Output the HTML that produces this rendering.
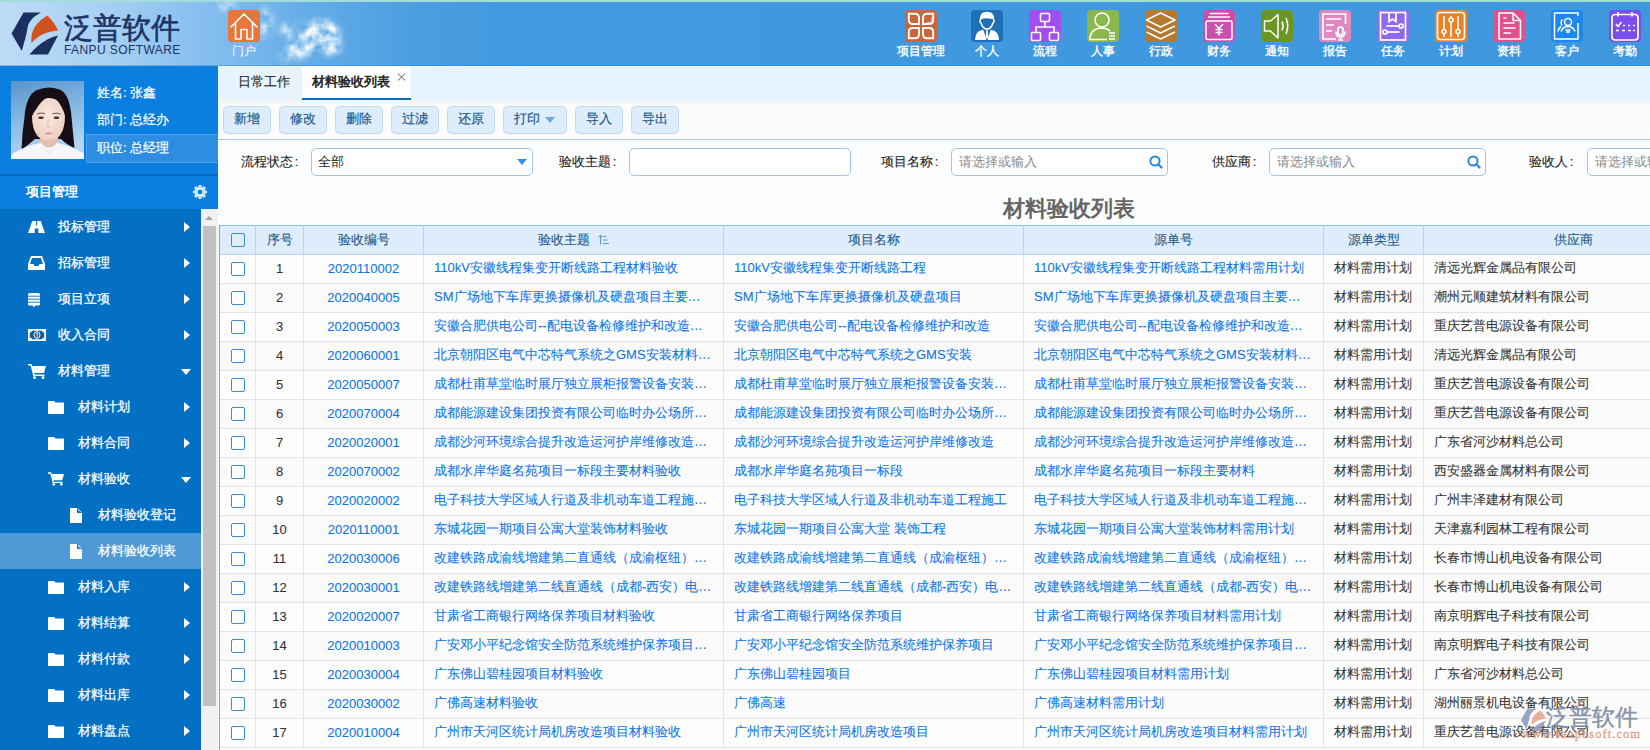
<!DOCTYPE html>
<html><head><meta charset="utf-8">
<style>
*{box-sizing:border-box;margin:0;padding:0}
html,body{width:1650px;height:750px;overflow:hidden;font-family:"Liberation Sans",sans-serif;font-size:13px;color:#333;background:#fcfdfe}
#user .abs,#content .btn,.tab{-webkit-text-stroke:0.2px currentColor}
#tbl th{-webkit-text-stroke:0.1px currentColor}
#tbl td{-webkit-text-stroke:0.08px currentColor}
.lbl{-webkit-text-stroke:0.1px currentColor}
.abs{position:absolute}
#hdr{position:absolute;left:0;top:0;width:1650px;height:66px;background:linear-gradient(90deg,#bddcf6 0px,#a6d0f3 110px,#86bff0 200px,#66aee8 300px,#4c9ee1 410px,#4199de 520px,#3f98de 1650px);overflow:hidden}
#hdr .topline{position:absolute;left:0;top:0;width:1650px;height:2px;background:#a3dcda}
#hdr .botline{position:absolute;left:0;top:65px;width:1650px;height:1px;background:rgba(40,120,200,.35)}
.nav{position:absolute;top:10px;width:58px;margin-left:-29px;text-align:center;color:#fff;font-size:12px}
.nav svg{display:block;margin:0 auto}
.nav span{display:block;line-height:14px;margin-top:1.5px;-webkit-text-stroke:0.35px #fff}
#side{position:absolute;left:0;top:66px;width:218px;height:684px;background:#0370c4;overflow:hidden}
#user{position:absolute;left:0;top:0;width:218px;height:109px;background:#0a7fe0}
#userline{position:absolute;left:0;top:108px;width:218px;height:2px;background:#0866bb}
#secthdr{position:absolute;left:0;top:110px;width:218px;height:33px;background:#0a7fe0;color:#fff;font-weight:bold;font-size:13px}
.mi{position:absolute;left:0;width:201px;height:36px;color:#fff;font-size:13px;line-height:35px}
.mi span{-webkit-text-stroke:0.25px #fff}
.mi svg{position:absolute}
.mi .arr{position:absolute;left:184px;top:13px;width:0;height:0;border-top:5px solid transparent;border-bottom:5px solid transparent;border-left:6px solid #fff}
.mi .darr{position:absolute;left:181px;top:16px;width:0;height:0;border-left:5px solid transparent;border-right:5px solid transparent;border-top:6px solid #fff}
#content{position:absolute;left:218px;top:66px;width:1432px;height:684px;background:#fbfdfe}
#tabs{position:absolute;left:0;top:0;width:1432px;height:34px;background:#e7f3fd}
.tab{position:absolute;top:0;height:34px;line-height:32px;font-size:13px;color:#333}
#toolbar{position:absolute;left:0;top:34px;width:1432px;height:40px;background:linear-gradient(#f1f3f4 0px,#fafbfb 5px,#fbfcfc 100%);border-bottom:1px solid #a9cae8}
.btn{position:absolute;top:6px;height:28px;width:48px;border:1px solid #c3d9ee;border-radius:5px;background:#deedfb;color:#22598c;font-size:13px;line-height:24px;text-align:center}
.lbl{position:absolute;top:85.5px;line-height:20px;font-size:13px;color:#222}
.inp{position:absolute;top:82px;height:28px;width:222px;border:1px solid #9fc5ea;border-radius:5px;background:#fff;font-size:13px;line-height:26px;padding-left:7px;color:#8a8a8a}
#title{position:absolute;left:785px;top:130px;font-size:22px;font-weight:bold;color:#666;line-height:26px}
#tbl{position:absolute;left:1px;top:159px;border-collapse:collapse;table-layout:fixed;width:1504px}
#tbl td,#tbl th{height:29px;border:1px solid #e3e3e3;white-space:nowrap;overflow:hidden;text-overflow:ellipsis;font-size:13px;font-weight:normal;padding:0 10px 2px 10px}
#tbl th{background:#deedfb;border-color:#b7d5f0;color:#22598c;text-align:center;height:29px;padding-bottom:1px}
#tbl tr:first-child th{border-top:1px solid #8dbde8}
#tbl td{color:#333}
#tbl tr.o td{background:#fdfdfd}
#tbl tr.e td{background:#fafafa}
#tbl td.c{text-align:center;padding:0 0 2px 0}
#tbl td:first-child,#tbl th:first-child{border-left:1px solid #6aa9e4}
#tbl th .cb{background:transparent;position:relative;top:-1px}
#tbl td a{color:#0a75ea;text-decoration:none}
#tbl td.lk{color:#0a75ea}
.cb{display:inline-block;width:14px;height:14px;border:1px solid #3c8bd8;border-radius:2px;background:#fff;vertical-align:middle}
</style></head><body>

<div id="hdr">
  <div class="topline"></div><div class="botline"></div>
  <!-- logo -->
  <svg class="abs" style="left:10px;top:11px" width="50" height="45" viewBox="0 0 50 45">
    <path d="M1.5 22.5 L13.5 1.5 L31 1.5 C24 5 18.5 10 17.5 17 C16.5 24 14 32 11.8 40 Z" fill="#1c2f60"/>
    <path d="M21.5 32 C21 23 22 14 37.5 4.5 C42 9 46 14 48 19.5 C38 20 27 25 21.5 32 Z" fill="#d0521c"/>
    <path d="M19.5 43.5 C28 33 38 27 48 24.5 L38 43.5 Z" fill="#1c2f60"/>
  </svg>
  <div class="abs" style="left:64px;top:10px;font-size:29px;color:#1d3265;line-height:36px;-webkit-text-stroke:0.6px #1d3265">泛普软件</div>
  <div class="abs" style="left:64px;top:43px;font-size:12px;color:#1d3265;line-height:14px;letter-spacing:0.42px">FANPU SOFTWARE</div>
  <!-- clouds -->
  <svg class="abs" style="left:200px;top:0" width="170" height="66" viewBox="0 0 170 66">
    <defs>
    <filter id="cl" x="-30%" y="-30%" width="160%" height="160%">
      <feGaussianBlur in="SourceGraphic" stdDeviation="3" result="b"/>
      <feTurbulence type="fractalNoise" baseFrequency="0.08" numOctaves="3" seed="3" result="n"/>
      <feColorMatrix in="n" type="matrix" values="0 0 0 0 1  0 0 0 0 1  0 0 0 0 1  0 0 0 2.6 -0.75" result="na"/>
      <feComposite in="b" in2="na" operator="in" result="c"/>
      <feGaussianBlur in="c" stdDeviation="0.7"/>
    </filter>
    </defs>
    <g filter="url(#cl)" fill="#fff">
      <ellipse cx="120" cy="34" rx="20" ry="14"/>
      <ellipse cx="105" cy="44" rx="18" ry="10"/>
      <ellipse cx="130" cy="46" rx="12" ry="9" opacity=".9"/>
      <ellipse cx="92" cy="55" rx="12" ry="6" opacity=".8"/>
      <ellipse cx="88" cy="30" rx="8" ry="7" opacity=".7"/>
      <ellipse cx="66" cy="24" rx="7" ry="15" opacity=".9"/>
      <ellipse cx="27" cy="7" rx="10" ry="4" opacity=".8"/>
    </g>
  </svg>
  <div class="nav" style="left:244px">
    <svg width="32" height="32" viewBox="0 0 32 32"><rect width="32" height="32" rx="4" fill="#e8763a"/>
    <path d="M3 17 L16 4 L29 17 M7.5 13 V29 H13 V19.5 H19 V29 H24.5 V13" fill="none" stroke="#fff" stroke-width="1.6" stroke-linejoin="round" stroke-linecap="round"/></svg>
    <span style="-webkit-text-stroke:0">门户</span>
  </div>

  <div class="nav" style="left:921px">
    <svg width="32" height="32" viewBox="0 0 32 32"><rect width="32" height="32" rx="4" fill="#c8653a"/>
    <g fill="none" stroke="#fff" stroke-width="1.9">
      <path d="M3.8 3.8 H10 Q14 3.8 14 7.8 V14 H7.8 Q3.8 14 3.8 10 Z"/>
      <path d="M18 14 V7.8 Q18 3.8 22 3.8 H28.2 V10 Q28.2 14 24.2 14 Z"/>
      <path d="M3.8 22 Q3.8 18 7.8 18 H14 V24.2 Q14 28.2 10 28.2 H3.8 Z"/>
      <path d="M18 18 H24.2 Q28.2 18 28.2 22 V28.2 H22 Q18 28.2 18 24.2 Z"/>
      <path d="M26.5 7.5 V10 Q26.5 12.3 24 12.3 H21.5" stroke-width=".7" opacity=".8"/>
    </g></svg>
    <span>项目管理</span>
  </div>
  <div class="nav" style="left:987px">
    <svg width="32" height="32" viewBox="0 0 32 32"><rect width="32" height="32" rx="4" fill="#1f6fb8"/>
    <path d="M9 10.5 Q8 2 16 1.8 Q24 2 23 10.5 Q22 8.2 16.5 8.4 Q12.5 7.5 9 10.5 Z" fill="#fff"/>
    <path d="M9.4 9.6 Q8.2 10.6 9.3 12.6 L10.2 13.2 Q11.6 18.9 16 18.9 Q20.4 18.9 21.8 13.2 L22.7 12.6 Q23.8 10.6 22.6 9.6" fill="none" stroke="#fff" stroke-width="1.5"/>
    <path d="M4 30 Q4.3 22.3 9.5 20.6 L12.2 19.8 L15.2 28 L15.2 30 Z M28 30 Q27.7 22.3 22.5 20.6 L19.8 19.8 L16.8 28 L16.8 30 Z M15.2 20.2 H16.8 L17.1 27 L16 28.8 L14.9 27 Z" fill="#fff"/>
    </svg>
    <span>个人</span>
  </div>
  <div class="nav" style="left:1045px">
    <svg width="32" height="32" viewBox="0 0 32 32"><rect width="32" height="32" rx="4" fill="#a24ff0"/>
    <g fill="none" stroke="#fff" stroke-width="1.6">
      <rect x="11.5" y="3.5" width="9" height="8" rx="1"/>
      <path d="M16 11.5 V17 M7 23 V17 H25 V23"/>
      <rect x="2.5" y="22.5" width="9" height="8" rx="1"/>
      <rect x="20.5" y="22.5" width="9" height="8" rx="1"/>
    </g></svg>
    <span>流程</span>
  </div>
  <div class="nav" style="left:1103px">
    <svg width="32" height="32" viewBox="0 0 32 32"><rect width="32" height="32" rx="4" fill="#8ab84c"/>
    <g fill="none" stroke="#fff" stroke-width="1.6">
      <circle cx="15" cy="10" r="7"/>
      <path d="M20 29.5 H3 Q3 18.5 15 18 Q20 18 23 21"/>
      <path d="M22 23 H28 M22 26 H28 M22 29 H28"/>
    </g></svg>
    <span>人事</span>
  </div>
  <div class="nav" style="left:1161px">
    <svg width="32" height="32" viewBox="0 0 32 32"><rect width="32" height="32" rx="4" fill="#b5792f"/>
    <g fill="none" stroke="#fff" stroke-width="1.5" stroke-linejoin="round">
      <path d="M1.5 10 L15.5 3 L30 10 L15.5 17 Z"/>
      <path d="M1.5 16 L15.5 23 L30 16"/>
      <path d="M1.5 22 L15.5 29 L30 22"/>
    </g></svg>
    <span>行政</span>
  </div>
  <div class="nav" style="left:1219px">
    <svg width="32" height="32" viewBox="0 0 32 32"><rect width="32" height="32" rx="4" fill="#c94fae"/>
    <g fill="none" stroke="#fff" stroke-width="1.5">
      <path d="M6.5 3.5 H25.5 M5 7 H27"/>
      <rect x="3" y="11" width="26" height="18.5" rx="1.5"/>
      <path d="M12 14 L16 18.5 L20 14 M16 18.5 V25.5 M12.5 19.5 H19.5 M12.5 22.5 H19.5"/>
    </g></svg>
    <span>财务</span>
  </div>
  <div class="nav" style="left:1277px">
    <svg width="32" height="32" viewBox="0 0 32 32"><rect width="32" height="32" rx="4" fill="#6a9624"/>
    <g fill="none" stroke="#fff" stroke-width="1.5" stroke-linejoin="round">
      <path d="M3.5 11 H9.5 L17 4.5 V28 L9.5 21 H3.5 Z"/>
      <path d="M21 11.5 Q23 16 21 20.5 M25 8 Q28.5 16 25 24"/>
    </g></svg>
    <span>通知</span>
  </div>
  <div class="nav" style="left:1335px">
    <svg width="32" height="32" viewBox="0 0 32 32"><rect width="32" height="32" rx="4" fill="#dd8ac0"/>
    <g fill="none" stroke="#fff" stroke-width="1.7">
      <path d="M17 29 H4 V4 H26.5 V14"/>
      <path d="M7 9 H22 M7 15 H15 M7 21 H13"/>
      <rect x="19" y="17" width="5" height="8" rx="2.5"/>
      <path d="M17 21.5 Q17 27 21.5 27 Q26 27 26 21.5 M21.5 27 V30 M19 30 H24"/>
    </g></svg>
    <span>报告</span>
  </div>
  <div class="nav" style="left:1393px">
    <svg width="32" height="32" viewBox="0 0 32 32"><rect width="32" height="32" rx="4" fill="#9069f0"/>
    <g fill="none" stroke="#fff" stroke-width="1.7">
      <rect x="3.5" y="2.5" width="25" height="27.5"/>
      <path d="M12 2.5 V11.5 L15.5 9 L19 11.5 V2.5"/>
      <path d="M9.5 16 H22"/><circle cx="24" cy="16" r="2"/>
      <path d="M10 22 H22.5"/><circle cx="8" cy="22" r="2"/>
    </g></svg>
    <span>任务</span>
  </div>
  <div class="nav" style="left:1451px">
    <svg width="32" height="32" viewBox="0 0 32 32"><rect width="32" height="32" rx="4" fill="#f08024"/>
    <g fill="none" stroke="#fff" stroke-width="1.6">
      <rect x="2.5" y="2.5" width="27" height="27" rx="3"/>
      <path d="M9 6 V19.5 M9 23.5 V27 M16 6 V8 M16 12 V27 M23 6 V19.5 M23 23.5 V27"/>
      <circle cx="9" cy="21.5" r="2"/><circle cx="16" cy="10" r="2"/><circle cx="23" cy="21.5" r="2"/>
    </g></svg>
    <span>计划</span>
  </div>
  <div class="nav" style="left:1509px">
    <svg width="32" height="32" viewBox="0 0 32 32"><rect width="32" height="32" rx="4" fill="#e0508a"/>
    <g fill="none" stroke="#fff" stroke-width="1.6" stroke-linejoin="round">
      <path d="M6 3 H20 L27.5 10.5 V29 H6 Z"/>
      <path d="M20 3 V10.5 H27.5"/>
      <path d="M10.5 8 H13.5 M10.5 13 H21.5 M10.5 18 H22.5 M10.5 23 H18"/>
    </g></svg>
    <span>资料</span>
  </div>
  <div class="nav" style="left:1567px">
    <svg width="32" height="32" viewBox="0 0 32 32"><rect width="32" height="32" rx="4" fill="#1b88ef"/>
    <g fill="none" stroke="#fff" stroke-width="1.5">
      <path d="M27 13 V29 H3.5 V3 H27 V6"/>
      <circle cx="17" cy="12" r="3.5"/>
      <path d="M10 21.5 Q12 16.5 17 16.5 Q22 16.5 24 21.5 M14.5 20 H19.5 M15 22 H19"/>
      <path d="M11.5 9.5 Q9 12 11 15.5 M10 16.5 Q7.5 18 7 21.5"/>
    </g></svg>
    <span>客户</span>
  </div>
  <div class="nav" style="left:1625px">
    <svg width="32" height="32" viewBox="0 0 32 32"><rect width="32" height="32" rx="4" fill="#7b4ded"/>
    <g fill="none" stroke="#fff" stroke-width="1.7">
      <rect x="3" y="4.5" width="26" height="25.5" rx="3"/>
      <path d="M9 2 V6.5 M23 2 V6.5"/>
      <path d="M7 14 L9 16.5 L12.5 12 M14 15.5 H16 M19 15.5 H21 M24 15.5 H26 M7 20.5 H10 M13 20.5 H16 M19 20.5 H22 M24 20.5 H26"/>
    </g></svg>
    <span>考勤</span>
  </div>
</div>

<div id="side">
  <div id="user">
        <svg class="abs" style="left:11px;top:15px" width="73" height="78" viewBox="0 0 73 78">
      <defs>
        <linearGradient id="pbg" x1="0" y1="0" x2="0.25" y2="1"><stop offset="0" stop-color="#5a93c9"/><stop offset=".5" stop-color="#86b8e4"/><stop offset="1" stop-color="#b4d6f3"/></linearGradient>
        <radialGradient id="pface" cx=".5" cy=".4" r=".65"><stop offset="0" stop-color="#f8e6dd"/><stop offset=".8" stop-color="#efd3c4"/><stop offset="1" stop-color="#dfb8a6"/></radialGradient>
        <filter id="pb" x="-10%" y="-10%" width="120%" height="120%"><feGaussianBlur stdDeviation=".45"/></filter>
      </defs>
      <rect width="73" height="78" fill="url(#pbg)"/>
      <g filter="url(#pb)">
      <path d="M10.5 69 Q11 52 13.5 36 Q15 14 26 9 Q38 4 50 9 Q59 15 60.5 36 Q62 52 63.5 67 Q56 64 50 58 L24 58 Q17 64 10.5 69 Z" fill="#141113"/>
      <path d="M29 52 L29 65 Q38 70 47 65 L47 52 Z" fill="#e4bfae"/>
      <path d="M21 35 Q21 18 38 17 Q54 18 54 35 Q54 48 48.5 55 Q43 60.5 37.5 60.5 Q32 60.5 26.5 55 Q21 48 21 35 Z" fill="url(#pface)"/>
      <path d="M20.5 36 Q20 16 37 12.5 Q42 12 41 14 Q33 17 28 24 Q23 31 20.5 36 Z" fill="#141113"/>
      <path d="M54.5 36 Q55 17 42 13 Q39 13 40 15 Q47 19 50 25 Q53 30 54.5 36 Z" fill="#141113"/>
      <path d="M0 78 L0 74 Q8 68 22 63.5 L30 62 Q38 71 46 62 L52 63.5 Q66 68 73 72.5 L73 78 Z" fill="#f5f6f9"/>
      <path d="M32.5 66 L38 73 L43.5 66" fill="none" stroke="#dfe2ea" stroke-width=".8"/>
      <ellipse cx="30" cy="36.8" rx="2.8" ry="1.3" fill="#3b2d2b"/><ellipse cx="45.5" cy="36.8" rx="2.8" ry="1.3" fill="#3b2d2b"/>
      <path d="M26 33 Q30 31.3 34 32.6 M41.5 32.6 Q45.5 31.3 49.5 33" stroke="#5a443c" stroke-width=".9" fill="none"/>
      <path d="M37.5 38.5 Q36.8 44 36 45.5 Q37.5 46.8 39.5 45.5" stroke="#d9ad9c" stroke-width=".7" fill="none"/>
      <path d="M33.5 52 Q37.7 54.6 42 52 Q37.7 50.8 33.5 52 Z" fill="#dc8790"/>
      </g>
    </svg>
    <div class="abs" style="left:86px;top:68px;width:132px;height:29px;background:#2d8de3;border:1px solid #4ea2eb;border-right:none"></div>
    <div class="abs" style="left:97px;top:17px;color:#fff;line-height:20px">姓名: 张鑫</div>
    <div class="abs" style="left:97px;top:44px;color:#fff;line-height:20px">部门: 总经办</div>
    <div class="abs" style="left:97px;top:72px;color:#fff;line-height:20px">职位: 总经理</div>
  </div>
  <div id="userline"></div>
  <div id="secthdr"><span class="abs" style="left:26px;top:5.5px;line-height:20px">项目管理</span>
    <svg class="abs" style="left:192px;top:8px" width="16" height="16" viewBox="0 0 16 16"><path fill="#d3e8fb" fill-rule="evenodd" d="M13.06 6.43 L15.03 6.43 L15.03 9.57 L13.06 9.57 L12.69 10.47 L14.08 11.86 L11.86 14.08 L10.47 12.69 L9.57 13.06 L9.57 15.03 L6.43 15.03 L6.43 13.06 L5.53 12.69 L4.14 14.08 L1.92 11.86 L3.31 10.47 L2.94 9.57 L0.97 9.57 L0.97 6.43 L2.94 6.43 L3.31 5.53 L1.92 4.14 L4.14 1.92 L5.53 3.31 L6.43 2.94 L6.43 0.97 L9.57 0.97 L9.57 2.94 L10.47 3.31 L11.86 1.92 L14.08 4.14 L12.69 5.53 Z M10.3 8 A2.3 2.3 0 1 0 5.7 8 A2.3 2.3 0 1 0 10.3 8 Z"/></svg>
  </div>
  <div id="menu" class="abs" style="left:0;top:143px;width:218px;height:541px"><div class="mi" style="top:0px;"><svg style="left:28px;top:12px" width="17" height="12" viewBox="0 0 17 12"><path d="M4.3 0 H8 V4.5 H9 V0 H12.7 L17 12 H10.3 V7.5 H6.7 V12 H0 Z" fill="#fff"/></svg><span class="abs" style="left:58px;top:0">投标管理</span><i class="arr"></i></div>
<div class="mi" style="top:36px;"><svg style="left:28px;top:11px" width="17" height="14" viewBox="0 0 17 14"><path d="M3 0 H14 L17 8 V14 H0 V8 Z M4 2 L2 8 H5.5 L6.5 10 H10.5 L11.5 8 H15 L13 2 Z" fill="#fff" fill-rule="evenodd"/></svg><span class="abs" style="left:58px;top:0">招标管理</span><i class="arr"></i></div>
<div class="mi" style="top:72px;"><svg style="left:28px;top:12px" width="12" height="15" viewBox="0 0 12 15"><path d="M1.5 0 H10.5 Q12 0 12 1.5 V11 Q12 12.5 10.5 12.5 H7.5 L5.5 14.5 L5 12.5 H1.5 Q0 12.5 0 11 V1.5 Q0 0 1.5 0 Z" fill="#fff"/><path d="M0 3.2 H12 M0 6.2 H12 M0 9.2 H12" stroke="#0370c4" stroke-width=".9"/></svg><span class="abs" style="left:58px;top:0">项目立项</span><i class="arr"></i></div>
<div class="mi" style="top:108px;"><svg style="left:28px;top:12px" width="18" height="12" viewBox="0 0 18 12"><rect width="18" height="12" fill="#fff"/><path d="M4 1.8 H14 Q14 3.5 16.2 3.5 V8.5 Q14 8.5 14 10.2 H4 Q4 8.5 1.8 8.5 V3.5 Q4 3.5 4 1.8 Z" fill="#0a5ca8"/><ellipse cx="9" cy="6" rx="3" ry="3.3" fill="none" stroke="#fff" stroke-width="1"/><path d="M8.2 4.6 L9.2 4 V8.2" stroke="#fff" stroke-width=".9" fill="none"/></svg><span class="abs" style="left:58px;top:0">收入合同</span><i class="arr"></i></div>
<div class="mi" style="top:144px;"><svg style="left:28px;top:11px" width="18" height="15" viewBox="0 0 18 15"><path d="M0 0 H3.5 L4.2 2 H18 L16 9 H6 L6.5 10.5 H16.5 V12 H5.3 L2.6 1.6 H0 Z" fill="#fff"/><circle cx="6.5" cy="13.5" r="1.5" fill="#fff"/><circle cx="15" cy="13.5" r="1.5" fill="#fff"/></svg><span class="abs" style="left:58px;top:0">材料管理</span><i class="darr"></i></div>
<div class="mi" style="top:180px;"><svg style="left:48px;top:12px" width="16" height="13" viewBox="0 0 16 13"><path d="M0 1 Q0 0 1 0 H6 L7.5 1.5 H15 Q16 1.5 16 2.5 V12 Q16 13 15 13 H1 Q0 13 0 12 Z" fill="#fff"/></svg><span class="abs" style="left:78px;top:0">材料计划</span><i class="arr"></i></div>
<div class="mi" style="top:216px;"><svg style="left:48px;top:12px" width="16" height="13" viewBox="0 0 16 13"><path d="M0 1 Q0 0 1 0 H6 L7.5 1.5 H15 Q16 1.5 16 2.5 V12 Q16 13 15 13 H1 Q0 13 0 12 Z" fill="#fff"/></svg><span class="abs" style="left:78px;top:0">材料合同</span><i class="arr"></i></div>
<div class="mi" style="top:252px;"><svg style="left:48px;top:11px" width="16" height="14" viewBox="0 0 18 15"><path d="M0 0 H3.5 L4.2 2 H18 L16 9 H6 L6.5 10.5 H16.5 V12 H5.3 L2.6 1.6 H0 Z" fill="#fff"/><circle cx="6.5" cy="13.5" r="1.5" fill="#fff"/><circle cx="15" cy="13.5" r="1.5" fill="#fff"/></svg><span class="abs" style="left:78px;top:0">材料验收</span><i class="darr"></i></div>
<div class="mi" style="top:288px;"><svg style="left:70px;top:11px" width="12" height="15" viewBox="0 0 12 15"><path d="M0 0 H7.5 L12 4.5 V15 H0 Z M7 0.5 V5 H11.5" fill="#fff"/><path d="M7.5 0 V4.5 H12" fill="none" stroke="#0870c2" stroke-width=".8"/></svg><span class="abs" style="left:98px;top:0">材料验收登记</span></div>
<div class="mi" style="top:324px;background:#4d9ad6;"><svg style="left:70px;top:11px" width="12" height="15" viewBox="0 0 12 15"><path d="M0 0 H7.5 L12 4.5 V15 H0 Z M7 0.5 V5 H11.5" fill="#fff"/><path d="M7.5 0 V4.5 H12" fill="none" stroke="#0870c2" stroke-width=".8"/></svg><span class="abs" style="left:98px;top:0">材料验收列表</span></div>
<div class="mi" style="top:360px;"><svg style="left:48px;top:12px" width="16" height="13" viewBox="0 0 16 13"><path d="M0 1 Q0 0 1 0 H6 L7.5 1.5 H15 Q16 1.5 16 2.5 V12 Q16 13 15 13 H1 Q0 13 0 12 Z" fill="#fff"/></svg><span class="abs" style="left:78px;top:0">材料入库</span><i class="arr"></i></div>
<div class="mi" style="top:396px;"><svg style="left:48px;top:12px" width="16" height="13" viewBox="0 0 16 13"><path d="M0 1 Q0 0 1 0 H6 L7.5 1.5 H15 Q16 1.5 16 2.5 V12 Q16 13 15 13 H1 Q0 13 0 12 Z" fill="#fff"/></svg><span class="abs" style="left:78px;top:0">材料结算</span><i class="arr"></i></div>
<div class="mi" style="top:432px;"><svg style="left:48px;top:12px" width="16" height="13" viewBox="0 0 16 13"><path d="M0 1 Q0 0 1 0 H6 L7.5 1.5 H15 Q16 1.5 16 2.5 V12 Q16 13 15 13 H1 Q0 13 0 12 Z" fill="#fff"/></svg><span class="abs" style="left:78px;top:0">材料付款</span><i class="arr"></i></div>
<div class="mi" style="top:468px;"><svg style="left:48px;top:12px" width="16" height="13" viewBox="0 0 16 13"><path d="M0 1 Q0 0 1 0 H6 L7.5 1.5 H15 Q16 1.5 16 2.5 V12 Q16 13 15 13 H1 Q0 13 0 12 Z" fill="#fff"/></svg><span class="abs" style="left:78px;top:0">材料出库</span><i class="arr"></i></div>
<div class="mi" style="top:504px;"><svg style="left:48px;top:12px" width="16" height="13" viewBox="0 0 16 13"><path d="M0 1 Q0 0 1 0 H6 L7.5 1.5 H15 Q16 1.5 16 2.5 V12 Q16 13 15 13 H1 Q0 13 0 12 Z" fill="#fff"/></svg><span class="abs" style="left:78px;top:0">材料盘点</span><i class="arr"></i></div>
  </div>
  <!-- scrollbar -->
  <div class="abs" style="left:201px;top:143px;width:17px;height:541px;background:#f1f1f1"></div>
  <div class="abs" style="left:203px;top:160px;width:13px;height:480px;background:#c1c1c1"></div>
  <div class="abs" style="left:205px;top:150px;width:0;height:0;border-left:4px solid transparent;border-right:4px solid transparent;border-bottom:4px solid #a3a3a3"></div>
</div>

<div id="content">
  <div id="tabs">
    <div class="tab" style="left:20px">日常工作</div>
    <div class="tab" style="left:84px;width:109px;background:#fff;border-bottom:2px solid #0a6fc2;padding-left:10px;color:#222;-webkit-text-stroke:0.55px #222">材料验收列表<svg class="abs" style="left:95px;top:7px" width="9" height="8" viewBox="0 0 9 8"><path d="M0.8 0.5 L8.2 7.5 M8.2 0.5 L0.8 7.5" stroke="#9a9a9a" stroke-width="1.1"/></svg></div>
  </div>
  <div id="toolbar">
    <div class="btn" style="left:5px">新增</div>
    <div class="btn" style="left:61px">修改</div>
    <div class="btn" style="left:117px">删除</div>
    <div class="btn" style="left:173px">过滤</div>
    <div class="btn" style="left:229px">还原</div>
    <div class="btn" style="left:285px;width:64px;text-align:left;padding-left:10px">打印<span class="abs" style="left:41px;top:10px;width:0;height:0;border-left:5px solid transparent;border-right:5px solid transparent;border-top:6px solid #6aa6de"></span></div>
    <div class="btn" style="left:357px">导入</div>
    <div class="btn" style="left:413px">导出</div>
  </div>
  <div class="lbl" style="left:23px">流程状态<span style="margin-left:1.8px">:</span></div>
  <div class="inp" style="left:93px;color:#222;padding-left:6px">全部<span class="abs" style="left:205px;top:10px;width:0;height:0;border-left:5px solid transparent;border-right:5px solid transparent;border-top:6px solid #3a8ee0"></span></div>
  <div class="lbl" style="left:341px">验收主题<span style="margin-left:1.8px">:</span></div>
  <div class="inp" style="left:411px"></div>
  <div class="lbl" style="left:663px">项目名称<span style="margin-left:1.8px">:</span></div>
  <div class="inp" style="left:733px;width:217px">请选择或输入<svg class="abs" style="left:197px;top:6px" width="14" height="14" viewBox="0 0 14 14"><circle cx="6" cy="6" r="4.6" fill="none" stroke="#2b88d8" stroke-width="2"/><path d="M9.3 9.3 L12.5 12.5" stroke="#2b88d8" stroke-width="2.2" stroke-linecap="round"/></svg></div>
  <div class="lbl" style="left:994px">供应商<span style="margin-left:1.8px">:</span></div>
  <div class="inp" style="left:1051px;width:217px">请选择或输入<svg class="abs" style="left:197px;top:6px" width="14" height="14" viewBox="0 0 14 14"><circle cx="6" cy="6" r="4.6" fill="none" stroke="#2b88d8" stroke-width="2"/><path d="M9.3 9.3 L12.5 12.5" stroke="#2b88d8" stroke-width="2.2" stroke-linecap="round"/></svg></div>
  <div class="lbl" style="left:1311px">验收人<span style="margin-left:1.8px">:</span></div>
  <div class="inp" style="left:1369px;width:217px">请选择或输入</div>
  <div id="title">材料验收列表</div>
  <table id="tbl">
    <colgroup><col style="width:36px"><col style="width:48px"><col style="width:120px"><col style="width:300px"><col style="width:300px"><col style="width:300px"><col style="width:100px"><col style="width:300px"></colgroup>
    <tbody id="tb"><tr><th class="c" style="padding:0"><span class="cb"></span></th><th style="padding:0">序号</th><th>验收编号</th><th>验收主题 <svg width="11" height="10" viewBox="0 0 11 10" style="vertical-align:-1px;margin-left:5px"><path d="M2.5 0.5 V9.5 M0.8 2.2 L2.5 0.5 L4.2 2.2" stroke="#5b9ad6" stroke-width="1.1" fill="none"/><path d="M5 1.5 H8 M5 5 H9.5 M5 8.5 H11" stroke="#5b9ad6" stroke-width="1.1"/></svg></th><th>项目名称</th><th>源单号</th><th>源单类型</th><th>供应商</th></tr>
<tr class="o"><td class="c"><span class="cb"></span></td><td class="c">1</td><td class="c lk">2020110002</td><td class="lk">110kV安徽线程集变开断线路工程材料验收</td><td class="lk">110kV安徽线程集变开断线路工程</td><td class="lk">110kV安徽线程集变开断线路工程材料需用计划</td><td>材料需用计划</td><td>清远光辉金属品有限公司</td></tr>
<tr class="e"><td class="c"><span class="cb"></span></td><td class="c">2</td><td class="c lk">2020040005</td><td class="lk">SM广场地下车库更换摄像机及硬盘项目主要材料验收</td><td class="lk">SM广场地下车库更换摄像机及硬盘项目</td><td class="lk">SM广场地下车库更换摄像机及硬盘项目主要材料需用计划</td><td>材料需用计划</td><td>潮州元顺建筑材料有限公司</td></tr>
<tr class="o"><td class="c"><span class="cb"></span></td><td class="c">3</td><td class="c lk">2020050003</td><td class="lk">安徽合肥供电公司--配电设备检修维护和改造项目材料验收</td><td class="lk">安徽合肥供电公司--配电设备检修维护和改造</td><td class="lk">安徽合肥供电公司--配电设备检修维护和改造项目材料需用计划</td><td>材料需用计划</td><td>重庆艺普电源设备有限公司</td></tr>
<tr class="e"><td class="c"><span class="cb"></span></td><td class="c">4</td><td class="c lk">2020060001</td><td class="lk">北京朝阳区电气中芯特气系统之GMS安装材料验收</td><td class="lk">北京朝阳区电气中芯特气系统之GMS安装</td><td class="lk">北京朝阳区电气中芯特气系统之GMS安装材料需用计划</td><td>材料需用计划</td><td>清远光辉金属品有限公司</td></tr>
<tr class="o"><td class="c"><span class="cb"></span></td><td class="c">5</td><td class="c lk">2020050007</td><td class="lk">成都杜甫草堂临时展厅独立展柜报警设备安装材料验收</td><td class="lk">成都杜甫草堂临时展厅独立展柜报警设备安装工程</td><td class="lk">成都杜甫草堂临时展厅独立展柜报警设备安装材料需用计划</td><td>材料需用计划</td><td>重庆艺普电源设备有限公司</td></tr>
<tr class="e"><td class="c"><span class="cb"></span></td><td class="c">6</td><td class="c lk">2020070004</td><td class="lk">成都能源建设集团投资有限公司临时办公场所材料验收</td><td class="lk">成都能源建设集团投资有限公司临时办公场所工程</td><td class="lk">成都能源建设集团投资有限公司临时办公场所材料需用计划</td><td>材料需用计划</td><td>重庆艺普电源设备有限公司</td></tr>
<tr class="o"><td class="c"><span class="cb"></span></td><td class="c">7</td><td class="c lk">2020020001</td><td class="lk">成都沙河环境综合提升改造运河护岸维修改造材料验收</td><td class="lk">成都沙河环境综合提升改造运河护岸维修改造</td><td class="lk">成都沙河环境综合提升改造运河护岸维修改造材料需用计划</td><td>材料需用计划</td><td>广东省河沙材料总公司</td></tr>
<tr class="e"><td class="c"><span class="cb"></span></td><td class="c">8</td><td class="c lk">2020070002</td><td class="lk">成都水岸华庭名苑项目一标段主要材料验收</td><td class="lk">成都水岸华庭名苑项目一标段</td><td class="lk">成都水岸华庭名苑项目一标段主要材料</td><td>材料需用计划</td><td>西安盛器金属材料有限公司</td></tr>
<tr class="o"><td class="c"><span class="cb"></span></td><td class="c">9</td><td class="c lk">2020020002</td><td class="lk">电子科技大学区域人行道及非机动车道工程施工材料验收</td><td class="lk">电子科技大学区域人行道及非机动车道工程施工</td><td class="lk">电子科技大学区域人行道及非机动车道工程施工材料需用计划</td><td>材料需用计划</td><td>广州丰泽建材有限公司</td></tr>
<tr class="e"><td class="c"><span class="cb"></span></td><td class="c">10</td><td class="c lk">2020110001</td><td class="lk">东城花园一期项目公寓大堂装饰材料验收</td><td class="lk">东城花园一期项目公寓大堂 装饰工程</td><td class="lk">东城花园一期项目公寓大堂装饰材料需用计划</td><td>材料需用计划</td><td>天津嘉利园林工程有限公司</td></tr>
<tr class="o"><td class="c"><span class="cb"></span></td><td class="c">11</td><td class="c lk">2020030006</td><td class="lk">改建铁路成渝线增建第二直通线（成渝枢纽）材料验收</td><td class="lk">改建铁路成渝线增建第二直通线（成渝枢纽）工程</td><td class="lk">改建铁路成渝线增建第二直通线（成渝枢纽）材料需用计划</td><td>材料需用计划</td><td>长春市博山机电设备有限公司</td></tr>
<tr class="e"><td class="c"><span class="cb"></span></td><td class="c">12</td><td class="c lk">2020030001</td><td class="lk">改建铁路线增建第二线直通线（成都-西安）电气材料验收</td><td class="lk">改建铁路线增建第二线直通线（成都-西安）电气工程</td><td class="lk">改建铁路线增建第二线直通线（成都-西安）电气材料需用计划</td><td>材料需用计划</td><td>长春市博山机电设备有限公司</td></tr>
<tr class="o"><td class="c"><span class="cb"></span></td><td class="c">13</td><td class="c lk">2020020007</td><td class="lk">甘肃省工商银行网络保养项目材料验收</td><td class="lk">甘肃省工商银行网络保养项目</td><td class="lk">甘肃省工商银行网络保养项目材料需用计划</td><td>材料需用计划</td><td>南京明辉电子科技有限公司</td></tr>
<tr class="e"><td class="c"><span class="cb"></span></td><td class="c">14</td><td class="c lk">2020010003</td><td class="lk">广安邓小平纪念馆安全防范系统维护保养项目材料验收</td><td class="lk">广安邓小平纪念馆安全防范系统维护保养项目</td><td class="lk">广安邓小平纪念馆安全防范系统维护保养项目材料需用计划</td><td>材料需用计划</td><td>南京明辉电子科技有限公司</td></tr>
<tr class="o"><td class="c"><span class="cb"></span></td><td class="c">15</td><td class="c lk">2020030004</td><td class="lk">广东佛山碧桂园项目材料验收</td><td class="lk">广东佛山碧桂园项目</td><td class="lk">广东佛山碧桂园项目材料需用计划</td><td>材料需用计划</td><td>广东省河沙材料总公司</td></tr>
<tr class="e"><td class="c"><span class="cb"></span></td><td class="c">16</td><td class="c lk">2020030002</td><td class="lk">广佛高速材料验收</td><td class="lk">广佛高速</td><td class="lk">广佛高速材料需用计划</td><td>材料需用计划</td><td>湖州丽景机电设备有限公司</td></tr>
<tr class="o"><td class="c"><span class="cb"></span></td><td class="c">17</td><td class="c lk">2020010004</td><td class="lk">广州市天河区统计局机房改造项目材料验收</td><td class="lk">广州市天河区统计局机房改造项目</td><td class="lk">广州市天河区统计局机房改造项目材料需用计划</td><td>材料需用计划</td><td>重庆艺普电源设备有限公司</td></tr></tbody>
  </table>
  <div class="abs" style="left:1px;top:159px;width:1px;height:530px;background:#6aa9e4"></div>
</div>
<div id="wm" class="abs" style="left:1518px;top:704px;width:130px;height:40px;pointer-events:none">
  <svg class="abs" style="left:2px;top:4px" width="27" height="24" viewBox="0 0 50 45">
    <path d="M1.5 22.5 L13.5 1.5 L31 1.5 C24 5 18.5 10 17.5 17 C16.5 24 14 32 11.8 40 Z" fill="#7e8fb0" opacity=".8"/>
    <path d="M21.5 32 C21 23 22 14 37.5 4.5 C42 9 46 14 48 19.5 C38 20 27 25 21.5 32 Z" fill="#e2a287" opacity=".85"/>
    <path d="M19.5 43.5 C28 33 38 27 48 24.5 L38 43.5 Z" fill="#7e8fb0" opacity=".8"/>
  </svg>
  <div class="abs" style="left:28px;top:-1px;font-size:23px;line-height:28px;color:rgba(122,134,162,.85);-webkit-text-stroke:0.5px rgba(122,134,162,.85);white-space:nowrap">泛普软件</div>
  <div class="abs" style="left:4px;top:24px;font-family:'Liberation Serif',serif;font-size:12.5px;line-height:12px;color:rgba(220,150,122,.85);-webkit-text-stroke:0.35px rgba(220,150,122,.85);letter-spacing:1.05px;white-space:nowrap">www.fanpusoft.com</div>
</div>
</body></html>
